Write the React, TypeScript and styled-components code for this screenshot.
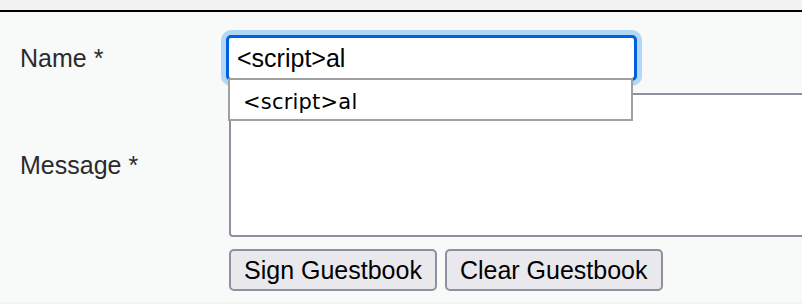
import React from "react";
import styled, { createGlobalStyle } from "styled-components";

const Global = createGlobalStyle`
  html, body {
    margin: 0;
    padding: 0;
    overflow: hidden;
    background: #f2f2f2;
    font-family: "Liberation Sans", Arial, sans-serif;
  }
  * { box-sizing: border-box; }
`;

const TopStrip = styled.div`
  height: 10px;
  background: #f2f2f2;
`;

const Section = styled.section`
  border-top: 2px solid #000;
  background: #f8f9f9;
  height: 292px;
  padding: 23px 0 0 20px;
`;

const Form = styled.form`
  display: grid;
  grid-template-columns: 209px auto;
  row-gap: 12px;
  align-items: center;
`;

const Label = styled.label`
  font-size: 25px;
  line-height: 29px;
  color: #2b2b2b;
`;

const FieldWrap = styled.div`
  position: relative;
  width: 408px;
  height: 46px;
`;

const TextInput = styled.input`
  display: block;
  margin-left: -3px;
  width: 411px;
  height: 46px;
  border: 3px solid #0060df;
  border-radius: 5px;
  box-shadow: 0 0 0 5px #b1d8f6;
  outline: none;
  background: #fff;
  padding: 0 8px;
  font-family: "Liberation Sans", Arial, sans-serif;
  font-size: 25px;
  color: #000;
`;

const Suggestions = styled.ul`
  position: absolute;
  top: 43px;
  left: -1px;
  width: 405px;
  height: 43px;
  margin: 0;
  padding: 4px 0 0 13px;
  list-style: none;
  background: #fff;
  border: 2px solid #a0a0a0;
  display: flex;
  align-items: center;
  z-index: 2;
`;

const Suggestion = styled.li`
  font-family: "DejaVu Sans", "Segoe UI", sans-serif;
  font-size: 21px;
  letter-spacing: 0.2px;
  color: #000;
`;

const MessageArea = styled.textarea`
  display: block;
  width: 600px;
  height: 144px;
  border: 2px solid #8f8f9d;
  border-radius: 4px;
  background: #fff;
  resize: none;
  outline: none;
  font-family: "Liberation Sans", Arial, sans-serif;
  font-size: 20px;
`;

const Buttons = styled.div`
  grid-column: 2;
  display: flex;
  gap: 8px;
`;

const Button = styled.button`
  height: 42px;
  padding: 0 13px;
  border: 2px solid #8f8f9d;
  border-radius: 5px;
  background: #e9e9ed;
  color: #000;
  font-family: "Liberation Sans", Arial, sans-serif;
  font-size: 25px;
  line-height: 29px;
`;

export default function App() {
  return (
    <>
      <Global />
      <TopStrip />
      <Section>
        <Form onSubmit={(e) => e.preventDefault()}>
          <Label htmlFor="name">Name *</Label>
          <FieldWrap>
            <TextInput id="name" defaultValue="<script>al" autoComplete="off" />
            <Suggestions>
              <Suggestion>&lt;script&gt;al</Suggestion>
            </Suggestions>
          </FieldWrap>
          <Label htmlFor="message">Message *</Label>
          <MessageArea id="message" />
          <Buttons>
            <Button type="submit">Sign Guestbook</Button>
            <Button type="button">Clear Guestbook</Button>
          </Buttons>
        </Form>
      </Section>
    </>
  );
}
